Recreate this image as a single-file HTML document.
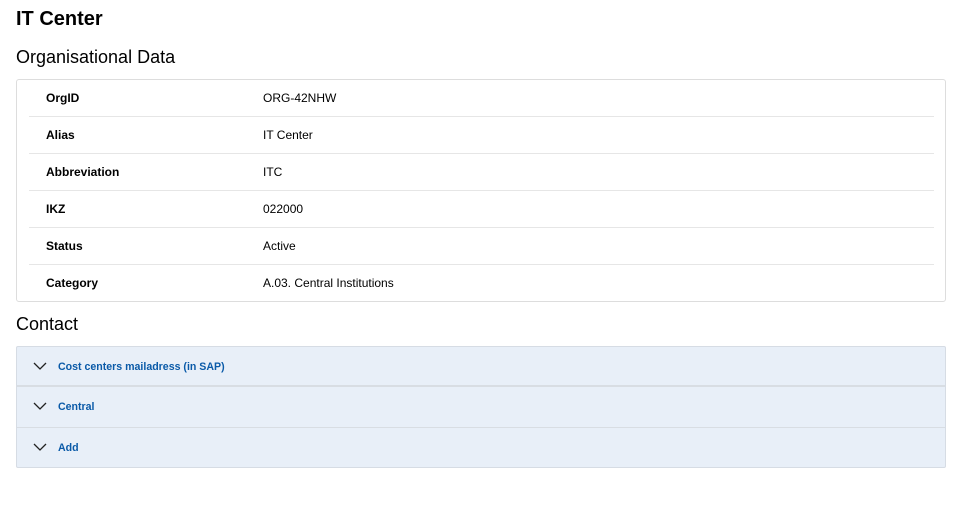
<!DOCTYPE html>
<html><head><style>
body{margin:0;background:#fff;font-family:"Liberation Sans",Arial,sans-serif;color:#000;}
h1{position:absolute;left:16px;top:8px;margin:0;font-size:20px;font-weight:bold;}
.h2{position:absolute;left:16px;margin:0;font-size:18px;font-weight:normal;}
.box{position:absolute;left:16px;top:79px;width:928px;height:221px;border:1px solid #ddd;border-radius:3px;}
.row{position:absolute;left:12px;width:905px;height:36px;border-bottom:1px solid #e6e6e6;font-size:12px;}
.l{position:absolute;left:17px;top:11px;font-weight:bold;}
.v{position:absolute;left:234px;top:11px;}
.acc{position:absolute;left:16px;top:346px;width:928px;height:120px;border:1px solid #d6dce4;background:#e8eff8;border-radius:2px;}
.a{position:absolute;left:0;width:928px;height:40px;font-size:10.6px;font-weight:bold;color:#0a5aa8;}
.a span{position:absolute;left:41px;top:14px;}
.a svg{position:absolute;left:16px;top:15px;}
</style></head><body>
<h1>IT Center</h1>
<div class="h2" style="top:47px">Organisational Data</div>
<div class="box">
<div class="row" style="top:0"><span class="l">OrgID</span><span class="v">ORG-42NHW</span></div>
<div class="row" style="top:37px"><span class="l">Alias</span><span class="v">IT Center</span></div>
<div class="row" style="top:74px"><span class="l">Abbreviation</span><span class="v">ITC</span></div>
<div class="row" style="top:111px"><span class="l">IKZ</span><span class="v">022000</span></div>
<div class="row" style="top:148px"><span class="l">Status</span><span class="v">Active</span></div>
<div class="row" style="top:185px;border-bottom:none"><span class="l">Category</span><span class="v">A.03. Central Institutions</span></div>
</div>
<div class="h2" style="top:314px">Contact</div>
<div class="acc">
<div class="a" style="top:0;border-bottom:2px solid #d8dde3;height:38px"><svg width="14" height="8" viewBox="0 0 14 8"><path d="M1 1L7 7L13 1" fill="none" stroke="#222" stroke-width="1.3"/></svg><span>Cost centers mailadress (in SAP)</span></div>
<div class="a" style="top:40px;border-bottom:1px solid #d8dde3;height:40px"><svg width="14" height="8" viewBox="0 0 14 8"><path d="M1 1L7 7L13 1" fill="none" stroke="#222" stroke-width="1.3"/></svg><span>Central</span></div>
<div class="a" style="top:81px"><svg width="14" height="8" viewBox="0 0 14 8"><path d="M1 1L7 7L13 1" fill="none" stroke="#222" stroke-width="1.3"/></svg><span>Add</span></div>
</div>
</body></html>
